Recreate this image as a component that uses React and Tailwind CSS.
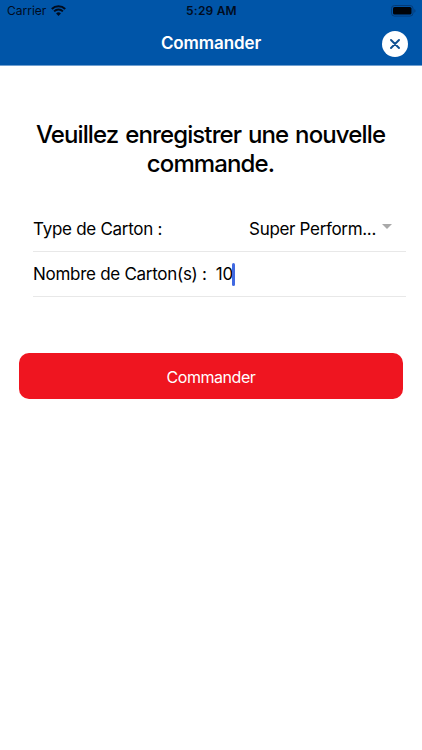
function WifiIcon() {
  return (
    <svg className="mb-px h-[11px] w-[15px]" viewBox="0 0 15 11" fill="none">
      <path d="M0.8 3.9a9.6 9.6 0 0 1 13.4 0" stroke="#000c1e" strokeWidth="2.1" />
      <path d="M3.1 6.4a6.2 6.2 0 0 1 8.8 0" stroke="#000c1e" strokeWidth="1.9" />
      <path d="M5.1 8.5a3.4 3.4 0 0 1 4.8 0L7.5 11z" fill="#000c1e" />
    </svg>
  );
}

function BatteryIcon() {
  return (
    <svg className="mb-px h-[12px] w-[25px]" viewBox="0 0 25 12" fill="none">
      <rect x="0.5" y="0.5" width="21.5" height="10.6" rx="3" stroke="#053b77" />
      <rect x="2" y="2" width="18.5" height="7.6" rx="1.6" fill="#000308" />
      <path d="M23.4 4v3.8c1.4-.6 1.4-3.2 0-3.8z" fill="#053b77" />
    </svg>
  );
}

function StatusBar() {
  return (
    <div className="grid h-[22px] grid-cols-3 items-center pl-[7px] pr-[6px] text-[#000c1e]">
      <div className="flex items-center gap-[5px]">
        <span className="text-[12px]">Carrier</span>
        <WifiIcon />
      </div>
      <span className="text-center text-[12px] font-semibold tracking-[0.2px]">5:29 AM</span>
      <div className="flex justify-end">
        <BatteryIcon />
      </div>
    </div>
  );
}

function Header({ title }) {
  return (
    <header className="h-[66px] border-b border-[#6f9fd0] bg-[#0055a8]">
      <StatusBar />
      <div className="grid h-[43px] grid-cols-[1fr_auto_1fr] items-center px-[14px]">
        <h1 className="col-start-2 text-[17px] font-semibold tracking-[-0.1px] text-white">{title}</h1>
        <button className="flex h-[26px] w-[26px] items-center justify-center justify-self-end rounded-full bg-white">
          <svg className="h-[10px] w-[10px]" viewBox="0 0 10 10" fill="none">
            <path d="M1 1l8 8M9 1L1 9" stroke="#0f4f91" strokeWidth="1.9" strokeLinecap="round" />
          </svg>
        </button>
      </div>
    </header>
  );
}

export default function App() {
  return (
    <div className="h-[750px] w-[422px] bg-white font-['Inter','Liberation_Sans',sans-serif] text-black">
      <Header title="Commander" />

      <main>
        <h2 className="mt-[54px] pr-px text-center text-[24px] font-medium leading-[29px] tracking-[-0.87px] [word-spacing:1.2px]">
          Veuillez enregistrer une nouvelle
          <br />
          commande.
        </h2>

        <div className="ml-[33px] mr-4 mt-[29px] text-[17px] tracking-[-0.28px]">
          <div className="flex h-[45px] items-center justify-between border-b border-[#e8e8e8] pr-[14px] pt-0.5">
            <span>Type de Carton :</span>
            <div className="flex items-center gap-[6px]">
              <span className="tracking-[-0.32px]">Super Perform...</span>
              <svg className="mb-[8px] h-[5px] w-[10px]" viewBox="0 0 10 5">
                <path d="M0 0h10L5 5z" fill="#a9a9a9" />
              </svg>
            </div>
          </div>
          <div className="flex h-[45px] items-center border-b border-[#e8e8e8] pt-0.5">
            <span>Nombre de Carton(s) :</span>
            <span className="ml-[9px] tracking-normal">10</span>
            <span className="-ml-px mb-0.5 h-[23px] w-[3px] rounded-full bg-[#4169e1]" />
          </div>
        </div>

        <button className="ml-[19px] mt-[56px] h-[46px] w-[384px] rounded-[10px] bg-[#ef1520] pt-px text-[16px] tracking-[-0.45px] text-white">
          Commander
        </button>
      </main>
    </div>
  );
}
